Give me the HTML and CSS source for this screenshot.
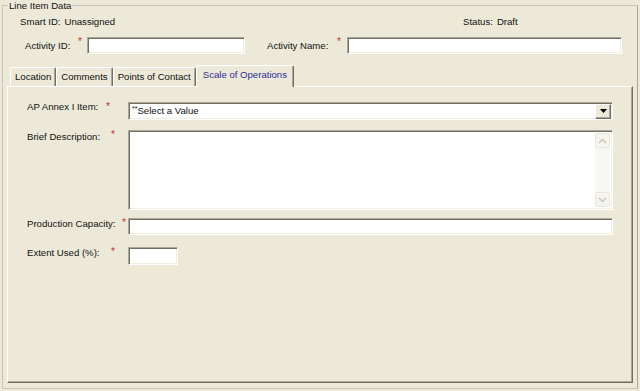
FILE: index.html
```html
<!DOCTYPE html>
<html lang="en">
<head>
<meta charset="utf-8">
<title>Line Item Data</title>
<link rel="stylesheet" href="styles.css">
</head>
<body>
<fieldset class="group">
  <legend class="group-title">Line Item Data</legend>
  <div class="info">
    <div class="info-item"><span>Smart ID:</span><span>Unassigned</span></div>
    <div class="info-item"><span>Status:</span><span>Draft</span></div>
  </div>
  <div class="ids">
    <label class="lbl lbl-aid">Activity ID:</label><span class="req req-aid">*</span><input class="txt aid" type="text">
    <label class="lbl lbl-aname">Activity Name:</label><span class="req req-aname">*</span><input class="txt aname" type="text">
  </div>
  <div class="tabs">
    <div class="tab">Location</div>
    <div class="tab">Comments</div>
    <div class="tab">Points of Contact</div>
    <div class="tab active">Scale of Operations</div>
  </div>
  <div class="panel">
    <div class="frow frow-select">
      <div class="fcell"><label class="flbl w-ap">AP Annex I Item:</label><span class="req">*</span></div>
      <div class="select sunken">
        <span class="select-text"><span class="stars">**</span>Select a Value</span>
        <span class="dd">
          <svg width="7" height="4" viewBox="0 0 7 4"><path d="M0 0h7L3.5 4z" fill="#000"/></svg>
        </span>
      </div>
    </div>
    <div class="frow frow-area">
      <div class="fcell"><label class="flbl w-brief">Brief Description:</label><span class="req">*</span></div>
      <div class="area sunken">
        <div class="vscroll">
          <span class="sbtn">
            <svg width="9" height="6" viewBox="0 0 9 6"><path d="M1 5L4.5 1.5 8 5" fill="none" stroke="#C9C7BA" stroke-width="1.5"/></svg>
          </span>
          <span class="sbtn">
            <svg width="9" height="6" viewBox="0 0 9 6"><path d="M1 1L4.5 4.5 8 1" fill="none" stroke="#C9C7BA" stroke-width="1.5"/></svg>
          </span>
        </div>
      </div>
    </div>
    <div class="frow frow-prod">
      <div class="fcell"><label class="flbl w-prod">Production Capacity:</label><span class="req">*</span></div>
      <input class="txt prod" type="text">
    </div>
    <div class="frow frow-ext">
      <div class="fcell"><label class="flbl w-ext">Extent Used (%):</label><span class="req">*</span></div>
      <input class="txt ext" type="text">
    </div>
  </div>
</fieldset>
</body>
</html>
```
FILE: styles.css
```css
html, body {
  margin: 0;
  padding: 0;
}
body {
  width: 640px;
  height: 391px;
  overflow: hidden;
  background: #ECE9D8;
  font-family: "Liberation Sans", Arial, sans-serif;
  font-size: 9.6px;
  line-height: 12px;
  color: #111;
}

.group {
  margin: 0 2px;
  padding: 0 0 5px;
  border: 1px solid #C8C6B8;
  border-right-color: #A9A798;
  min-width: 0;
}
.group-title {
  margin-left: 5px;
  padding: 0 1px;
  line-height: 11px;
}

.info {
  display: grid;
  grid-template-columns: 443px auto;
  margin-top: 5px;
  padding-left: 17px;
  height: 12px;
}
.info-item {
  display: flex;
  gap: 4px;
}

.ids {
  display: flex;
  align-items: flex-start;
  margin-top: 9px;
  padding-left: 22px;
  height: 17px;
}
.lbl {
  margin-top: 3px;
  white-space: nowrap;
}
.lbl-aid { width: 53px; }
.lbl-aname { width: 70px; margin-left: 22px; }
.req {
  color: #C0302C;
  font-size: 10px;
  line-height: 10px;
  white-space: nowrap;
}
.req-aid { width: 9px; }
.req-aname { width: 10px; }

.txt {
  box-sizing: border-box;
  height: 17px;
  margin: 0;
  padding: 0 2px;
  font: inherit;
  background: #fff;
  border: 1px solid;
  border-color: #ACA899 #fff #fff #ACA899;
  box-shadow: inset 1px 1px 0 #716F64, inset -1px -1px 0 #F1EFE2;
  outline: none;
}
.sunken {
  box-sizing: border-box;
  background: #fff;
  border: 1px solid;
  border-color: #ACA899 #fff #fff #ACA899;
  box-shadow: inset 1px 1px 0 #716F64, inset -1px -1px 0 #F1EFE2;
}
.aid { width: 158px; }
.aname { width: 275px; }

.tabs {
  position: relative;
  z-index: 1;
  display: flex;
  align-items: flex-end;
  margin-top: 11px;
  padding-left: 7px;
  height: 21px;
}
.tab {
  box-sizing: border-box;
  height: 19px;
  padding: 0 4px;
  line-height: 18px;
  white-space: nowrap;
  background: #ECE9D8;
  border-top: 1px solid #fff;
  border-left: 1px solid #fff;
  border-right: 1px solid #716F64;
  box-shadow: inset -1px 0 0 #ACA899;
  border-radius: 2px 2px 0 0;
}
.tab.active {
  height: 22px;
  margin: 0 0 -1px 0;
  padding: 0 6px 0 6px;
  color: #2C2C9E;
}

.panel {
  box-sizing: border-box;
  height: 297px;
  margin: 0 4px;
  padding: 15px 0 0 19px;
  border: 1px solid;
  border-color: #fff #716F64 #716F64 #fff;
  box-shadow: inset -1px -1px 0 #ACA899;
}
.frow {
  display: flex;
  align-items: flex-start;
}
.fcell {
  display: flex;
  align-items: flex-start;
  width: 101px;
  flex: none;
}
.flbl { white-space: nowrap; }
.w-ap { width: 79px; margin-top: -1px; }
.w-brief { width: 84px; margin-top: 1px; }
.w-prod { width: 95px; }
.w-ext { width: 84px; }

.frow-area { margin-top: 10px; }
.frow-prod { margin-top: 8px; }
.frow-ext { margin-top: 12px; }

.select {
  display: flex;
  align-items: center;
  width: 485px;
  height: 18px;
  padding: 1px 1px 1px 3px;
}
.select-text { flex: 1; }
.stars {
  font-size: 7px;
  vertical-align: top;
  line-height: 8px;
}
.dd {
  box-sizing: border-box;
  display: flex;
  align-items: center;
  justify-content: center;
  width: 16px;
  height: 15px;
  background: #ECE9D8;
  border: 1px solid;
  border-color: #fff #716F64 #716F64 #fff;
  box-shadow: inset -1px -1px 0 #ACA899;
}

.area {
  display: flex;
  justify-content: flex-end;
  width: 485px;
  height: 80px;
  padding: 2px 2px 2px 0;
}
.vscroll {
  display: flex;
  flex-direction: column;
  justify-content: space-between;
  width: 15px;
  background: #F7F7F3;
}
.sbtn {
  box-sizing: border-box;
  display: flex;
  align-items: center;
  justify-content: center;
  height: 15px;
  border: 1px solid #E8E7DF;
  border-radius: 2px;
  background: #F5F4EE;
}

.prod { width: 485px; }
.ext { width: 50px; height: 18px; }
```
